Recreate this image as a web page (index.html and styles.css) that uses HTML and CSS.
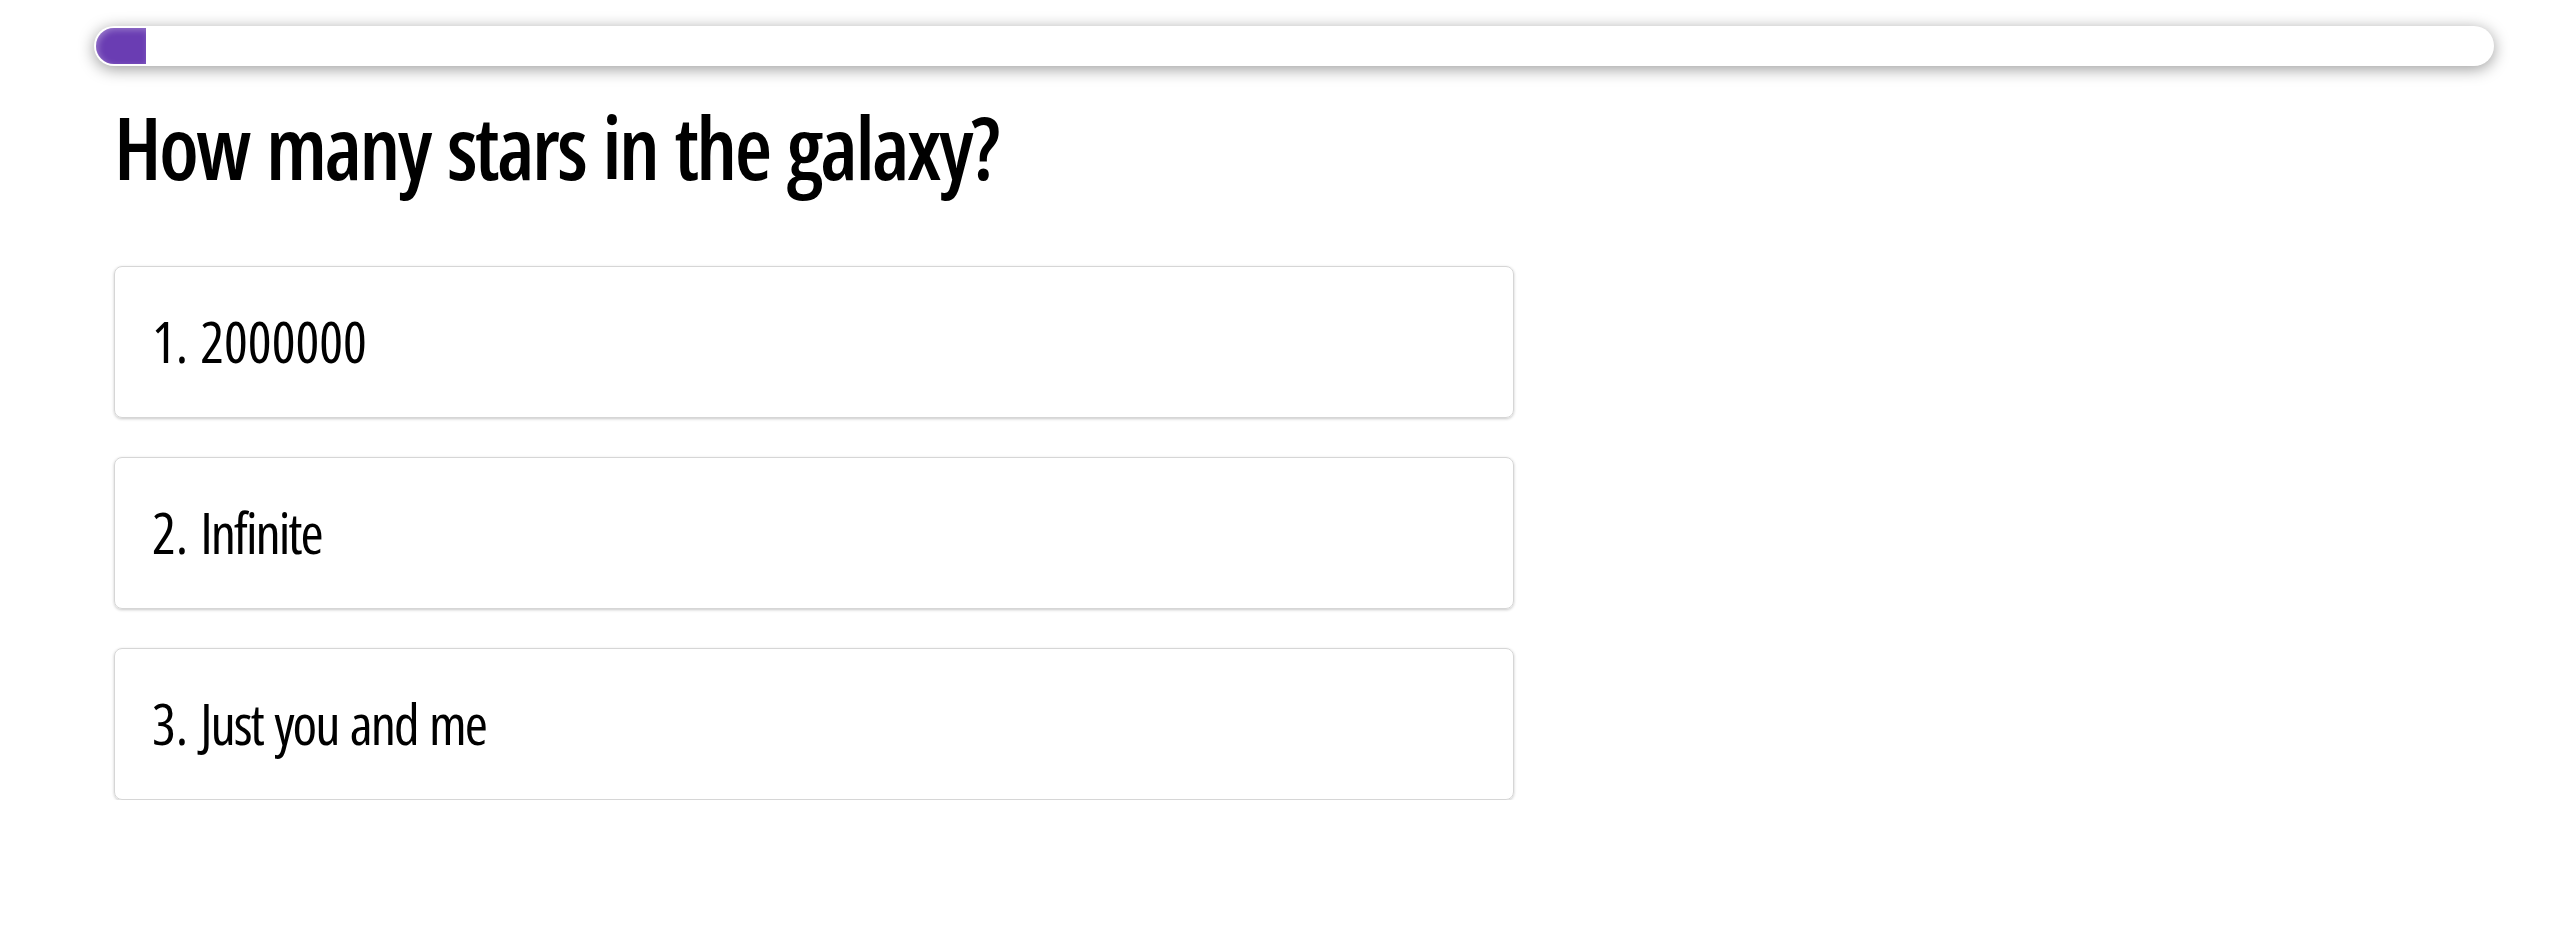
FILE: index.html
```html
<!DOCTYPE html>
<html lang="en">
<head>
<meta charset="utf-8">
<title>Quiz</title>
<link rel="stylesheet" href="styles.css">
</head>
<body>
<div class="page">
  <div class="progress">
    <div class="progress-fill" style="width:50px"></div>
  </div>
  <main class="quiz">
    <h1 class="question">How many stars in the galaxy?</h1>
    <ol class="answers">
      <li class="answer"><span class="num">1.</span><span class="label">2000000</span></li>
      <li class="answer"><span class="num">2.</span><span class="label text">Infinite</span></li>
      <li class="answer"><span class="num">3.</span><span class="label text">Just you and me</span></li>
    </ol>
  </main>
</div>
</body>
</html>
```
FILE: styles.css
```css
html, body {
  margin: 0;
  padding: 0;
  background: #ffffff;
}

body {
  font-family: "Open Sans", "Roboto", sans-serif;
  font-stretch: 75%;
  color: #000;
}

.page {
  display: flex;
  flex-direction: column;
  padding: 26px 0 0 94px;
}

.progress {
  width: 2400px;
  height: 40px;
  box-sizing: border-box;
  padding: 2px;
  background: #fff;
  border-radius: 20px;
  box-shadow: 0 3px 16px rgba(0, 0, 0, 0.4);
  display: flex;
}

.progress-fill {
  height: 36px;
  border-radius: 18px 0 0 18px;
  background: #6a3db3;
  box-shadow: inset 2px 2px 6px rgba(255, 255, 255, 0.3);
}

.quiz {
  display: flex;
  flex-direction: column;
  padding-left: 20px;
}

.question {
  margin: 27px 0 0 0;
  font-size: 86px;
  line-height: 108px;
  font-weight: 600;
  letter-spacing: -2.6px;
  word-spacing: 4px;
}

.answers {
  list-style: none;
  margin: 65px 0 0 0;
  padding: 0;
  display: flex;
  flex-direction: column;
  gap: 39px;
}

.answer {
  width: 1400px;
  height: 152px;
  box-sizing: border-box;
  border: 1px solid #d6d6d6;
  border-radius: 8px;
  box-shadow: 0 1px 3px rgba(0, 0, 0, 0.22);
  display: flex;
  align-items: center;
  padding-left: 37px;
  font-size: 56px;
  line-height: 1.2;
  font-weight: 400;
}

.num {
  margin-right: 12px;
}

.text {
  letter-spacing: -2px;
  word-spacing: 3px;
}
```
